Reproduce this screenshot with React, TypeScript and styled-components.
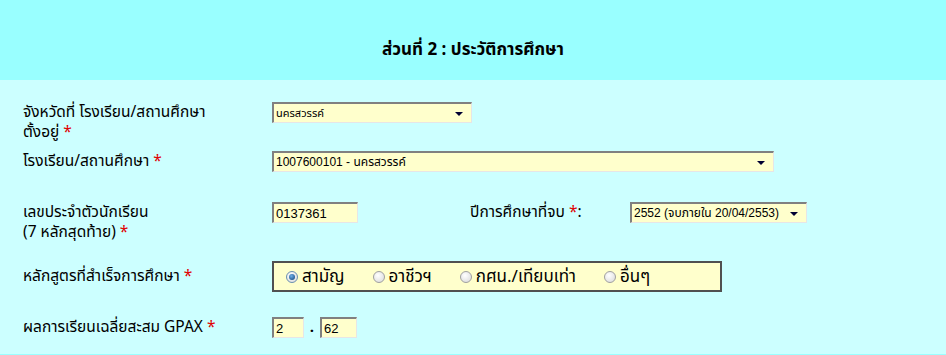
import React from "react";
import styled, { createGlobalStyle, css } from "styled-components";

const GlobalStyle = createGlobalStyle`
  html, body {
    margin: 0;
    padding: 0;
    background: #99ffff;
  }
  body {
    font-family: Tahoma, "Noto Sans Thai", "Noto Sans", "DejaVu Sans", sans-serif;
    color: #000;
  }
`;

const Page = styled.div`
  width: 946px;
  background: #99ffff;
  padding-bottom: 4px;
`;

const Header = styled.div`
  height: 80px;
  display: flex;
  align-items: center;
  justify-content: center;
  padding-top: 20px;
  box-sizing: border-box;
  font-size: 17px;
  font-weight: bold;
  background: #99ffff;
`;

const Form = styled.div`
  background: #ccffff;
  padding: 22px 0 15px 23px;
  display: flex;
  flex-direction: column;
`;

const Row = styled.div<{ $gap: number; $center?: boolean }>`
  display: grid;
  grid-template-columns: 249px 1fr;
  margin-top: ${(p) => p.$gap}px;
  align-items: ${(p) => (p.$center ? "center" : "start")};
`;

const Label = styled.div<{ $multi?: boolean }>`
  font-size: 15.5px;
  line-height: ${(p) => (p.$multi ? 20 : 19)}px;
  padding-top: ${(p) => (p.$multi ? 1 : 0)}px;
`;

const Star = styled.span`
  color: #e00000;
`;

const fieldBorder = css`
  box-sizing: border-box;
  background: #ffffcc;
  border-top: 2px solid #808080;
  border-left: 2px solid #808080;
  border-right: 1px solid #e6e6e6;
  border-bottom: 1px solid #e6e6e6;
`;

const SelectBox = styled.div<{ $width: number; $small?: boolean }>`
  ${fieldBorder};
  width: ${(p) => p.$width}px;
  height: 21px;
  display: flex;
  align-items: center;
  justify-content: space-between;
  padding: 0 8px 0 2px;
  font-family: Arial, "Liberation Sans", "Noto Sans Thai", sans-serif;
  font-size: ${(p) => (p.$small ? 11 : 12)}px;
`;

const Arrow = styled.span`
  width: 0;
  height: 0;
  border-left: 4px solid transparent;
  border-right: 4px solid transparent;
  border-top: 4px solid #000033;
  margin-top: 1px;
`;

const TextBox = styled.div<{ $width: number }>`
  ${fieldBorder};
  width: ${(p) => p.$width}px;
  height: 21px;
  display: flex;
  align-items: center;
  padding-left: 2px;
  font-family: Arial, "Liberation Sans", sans-serif;
  font-size: 13px;
`;

const Inline = styled.div`
  display: grid;
  grid-template-columns: 198px 160px auto;
  align-items: center;
`;

const RadioGroup = styled.div`
  box-sizing: border-box;
  width: 450px;
  height: 31px;
  background: #ffffcc;
  border: 2px solid #505050;
  display: flex;
  align-items: center;
  gap: 28px;
  padding-left: 12px;
  font-size: 17px;
`;

const RadioItem = styled.label`
  display: flex;
  align-items: center;
  gap: 4px;
`;

const RadioDot = styled.span<{ $checked?: boolean }>`
  width: 12px;
  height: 12px;
  border-radius: 50%;
  box-sizing: border-box;
  border: 1px solid #a0a0a0;
  background: radial-gradient(circle at 40% 35%, #ffffff 0%, #dcdcdc 90%);
  display: flex;
  align-items: center;
  justify-content: center;
  ${(p) =>
    p.$checked &&
    css`
      border-color: #6a8fb0;
      &::after {
        content: "";
        width: 6px;
        height: 6px;
        border-radius: 50%;
        background: radial-gradient(circle at 40% 35%, #6fb0e8 0%, #1d4f86 85%);
      }
    `}
`;

const GpaRow = styled.div`
  display: flex;
  align-items: center;
`;

const Dot = styled.span`
  width: 16px;
  text-align: center;
  font-size: 15px;
  font-weight: bold;
`;

const Strip = styled.div`
  height: 3px;
  background: #99ffff;
`;

const courses = ["สามัญ", "อาชีวฯ", "กศน./เทียบเท่า", "อื่นๆ"];

export default function App() {
  return (
    <Page>
      <GlobalStyle />
      <Header>ส่วนที่ 2 : ประวัติการศึกษา</Header>
      <Form>
        <Row $gap={0}>
          <Label $multi>
            จังหวัดที่ โรงเรียน/สถานศึกษา
            <br />
            ตั้งอยู่ <Star>*</Star>
          </Label>
          <SelectBox $width={200} $small>
            <span>นครสวรรค์</span>
            <Arrow />
          </SelectBox>
        </Row>
        <Row $gap={8} $center>
          <Label>
            โรงเรียน/สถานศึกษา <Star>*</Star>
          </Label>
          <SelectBox $width={502}>
            <span>1007600101 - นครสวรรค์</span>
            <Arrow />
          </SelectBox>
        </Row>
        <Row $gap={30}>
          <Label $multi>
            เลขประจำตัวนักเรียน
            <br />
            (7 หลักสุดท้าย) <Star>*</Star>
          </Label>
          <Inline>
            <TextBox $width={86}>0137361</TextBox>
            <Label>
              ปีการศึกษาที่จบ <Star>*</Star>:
            </Label>
            <SelectBox $width={177}>
              <span>2552 (จบภายใน 20/04/2553)</span>
              <Arrow />
            </SelectBox>
          </Inline>
        </Row>
        <Row $gap={18} $center>
          <Label>
            หลักสูตรที่สำเร็จการศึกษา <Star>*</Star>
          </Label>
          <RadioGroup>
            {courses.map((c, i) => (
              <RadioItem key={c}>
                <RadioDot $checked={i === 0} />
                {c}
              </RadioItem>
            ))}
          </RadioGroup>
        </Row>
        <Row $gap={24} $center>
          <Label>
            ผลการเรียนเฉลี่ยสะสม GPAX <Star>*</Star>
          </Label>
          <GpaRow>
            <TextBox $width={32}>2</TextBox>
            <Dot>.</Dot>
            <TextBox $width={37}>62</TextBox>
          </GpaRow>
        </Row>
      </Form>
      <Strip />
    </Page>
  );
}
